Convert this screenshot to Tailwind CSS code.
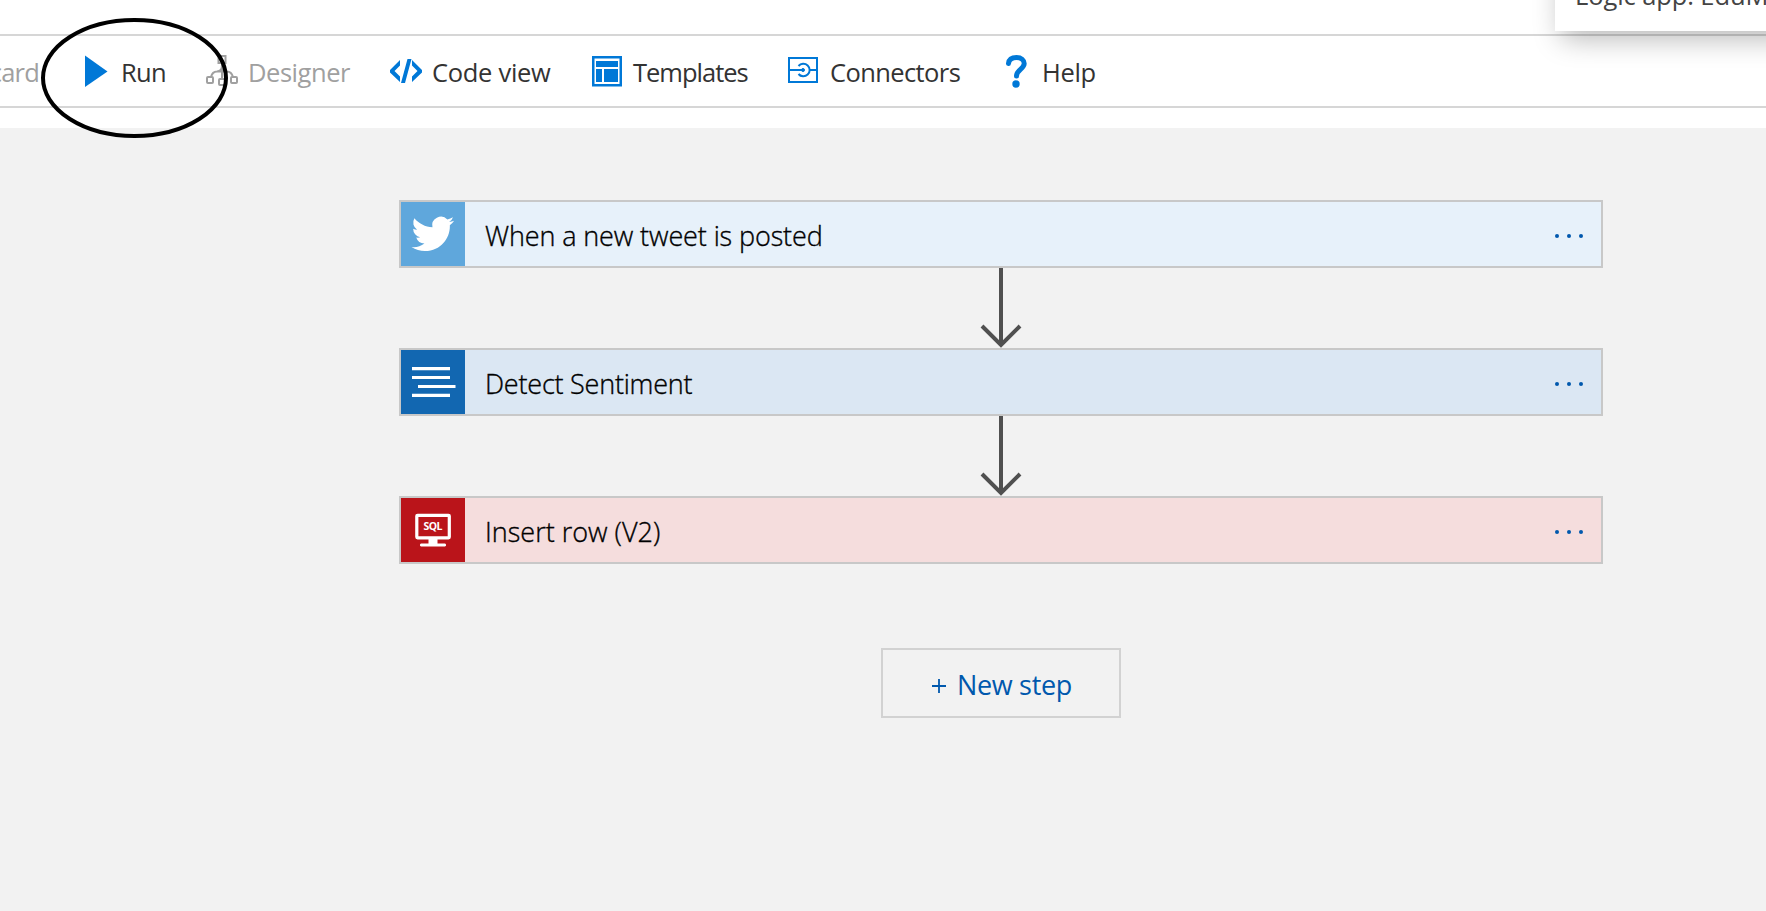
<!DOCTYPE html>
<html lang="en">
<head>
<meta charset="utf-8">
<title>Logic app designer</title>
<script src="https://cdn.jsdelivr.net/npm/@tailwindcss/browser@4"></script>
</head>
<body class="w-[1766px] h-[911px] overflow-hidden bg-white relative flex flex-col font-['Open_Sans','Noto_Sans',sans-serif]">
<header class="mt-[34px] h-[74px] shrink-0 border-y-2 border-[#d6d6d6] pt-[2px] flex items-center text-[25.5px] leading-[34px] text-[#333] whitespace-nowrap">
  <div class="w-[80px] shrink-0 text-[#a0a0a0] flex justify-start"><span class="w-[39px] flex justify-end tracking-[-0.8px]">Discard</span></div>
  <div class="w-[126px] shrink-0 flex items-center">
    <svg class="w-[32px] h-[34px] mr-[9px]" viewBox="0 0 32 34"><path d="M5 .5 27.500 16.500 5 32Z" fill="#0078d7"/></svg>
    <span class="tracking-[-0.7px]">Run</span>
  </div>
  <div class="w-[184px] shrink-0 flex items-center text-[#a0a0a0]">
    <svg class="w-[32px] h-[34px] mr-[10px]" viewBox="0 0 32 34" fill="none" stroke="#a0a0a0" stroke-width="2"><rect x="12.500" y="1" width="7" height="7"/><rect x="1" y="22" width="6" height="6" rx="1"/><rect x="13" y="24" width="6" height="6" rx="1"/><rect x="25" y="22" width="6" height="6" rx="1"/><path d="M16 8v16M5 22c1-4 3-5.500 6-5.500h10c3 0 5 2 6 5.500M16 10c0 5-2 6-5 6.500M16 10c0 5 2 6 5 6.500"/></svg>
    <span class="tracking-[-0.45px]">Designer</span>
  </div>
  <div class="w-[201px] shrink-0 flex items-center">
    <svg class="w-[32px] h-[34px] mr-[10px]" viewBox="0 0 32 34" fill="#0078d7"><path d="M10 5v5.500L4.500 16 10 21.500V27L0 17.500v-2.500ZM22 5v5.500l5.500 5.500-5.500 5.500V27l10-9.500v-2.500ZM17.500 4h4L15 28h-4Z"/></svg>
    <span class="tracking-[-0.3px]">Code view</span>
  </div>
  <div class="w-[196px] shrink-0 flex items-center">
    <svg class="w-[32px] h-[34px] mr-[10px]" viewBox="0 0 32 34"><rect x="1" y="1" width="30" height="30.500" fill="#0078d7"/><path d="M3.500 3.500h25v25.500h-25Z" fill="#fff"/><path d="M5 6h22v6H5ZM5 14h6v13H5ZM13 14h14v13H13Z" fill="#0078d7"/></svg>
    <span class="tracking-[-1px]">Templates</span>
  </div>
  <div class="w-[213px] shrink-0 flex items-center">
    <svg class="w-[32px] h-[34px] mr-[11px]" viewBox="0 0 32 34" fill="none" stroke="#0078d7" stroke-width="2"><rect x="2" y="3" width="28" height="24"/><path d="M2 15h14M22 15h8M11.500 11a6.300 6.300 0 1 1 0 8"/><circle cx="16" cy="15" r="1.500" fill="#0078d7" stroke-width="1"/></svg>
    <span class="tracking-[-0.6px]">Connectors</span>
  </div>
  <div class="shrink-0 flex items-center">
    <svg class="w-[32px] h-[34px] mr-[10px]" viewBox="0 0 32 34" fill="none" stroke="#0078d7" stroke-width="5"><path d="M8.500 8.500C9 4.500 12 2.600 16.500 2.600c5 0 7.700 2.600 7.700 6 0 5.400-7.700 6.400-7.700 12.400" stroke-linecap="round"/><circle cx="16" cy="29" r="3.700" fill="#0078d7" stroke="none"/></svg>
    <span class="tracking-[-0.35px]">Help</span>
  </div>
</header>
<main class="mt-[20px] flex-1 bg-[#f2f2f2] pt-[72px] pl-[399px] flex flex-col text-[27px] text-black">
  <div class="w-[1204px] flex flex-col items-center">
    <section class="w-full h-[68px] border-2 border-[#c8c8c8] bg-[#e7f1fa] flex items-center">
      <div class="w-[64px] h-[64px] bg-[#5fa7dc] shrink-0"><svg class="w-full h-full" viewBox="0 0 64 64"><g transform="translate(10.500 10.700) scale(1.780 1.760)"><path fill="#fff" d="M23.950 4.570a10 10 0 0 1-2.820.77 4.960 4.960 0 0 0 2.160-2.720c-.95.550-2 .95-3.130 1.180a4.920 4.920 0 0 0-8.380 4.480C7.690 8.090 4.070 6.130 1.640 3.160a4.920 4.920 0 0 0 1.520 6.570 4.900 4.900 0 0 1-2.230-.61v.06a4.920 4.920 0 0 0 3.950 4.830 5 5 0 0 1-2.210.08 4.940 4.940 0 0 0 4.600 3.420A9.870 9.870 0 0 1 0 19.540a14 14 0 0 0 7.550 2.210c9.050 0 14-7.500 14-13.980 0-.21 0-.42-.02-.63a9.940 9.940 0 0 0 2.420-2.570Z"/></g></svg></div>
      <h2 class="ml-[20px] mt-[4px] flex-1 font-light [-webkit-text-stroke:0.35px_#000] tracking-[-0.12px]">When a new tweet is posted</h2>
      <svg class="w-[28px] h-[4px] mr-[18px] mt-[4px]" viewBox="0 0 28 4" fill="#0058ad"><circle cx="2" cy="2" r="2"/><circle cx="14" cy="2" r="2"/><circle cx="26" cy="2" r="2"/></svg>
    </section>
    <svg class="w-[44px] h-[80px]" viewBox="0 0 44 80" fill="none" stroke="#505050" stroke-width="4"><path d="M22 0v77M3 58 22 77l19-19"/></svg>
    <section class="w-full h-[68px] border-2 border-[#c8c8c8] bg-[#dbe7f3] flex items-center">
      <div class="w-[64px] h-[64px] bg-[#1267b1] shrink-0"><svg class="w-full h-full" viewBox="0 0 64 64" fill="#fff"><path d="M11 17h38v3.300H11ZM11 26h38v3H11ZM17 35h37.500v3H17ZM11 43.700h38V47H11Z"/></svg></div>
      <h2 class="ml-[20px] mt-[4px] flex-1 font-light [-webkit-text-stroke:0.35px_#000] tracking-[-0.22px]">Detect Sentiment</h2>
      <svg class="w-[28px] h-[4px] mr-[18px] mt-[4px]" viewBox="0 0 28 4" fill="#0058ad"><circle cx="2" cy="2" r="2"/><circle cx="14" cy="2" r="2"/><circle cx="26" cy="2" r="2"/></svg>
    </section>
    <svg class="w-[44px] h-[80px]" viewBox="0 0 44 80" fill="none" stroke="#505050" stroke-width="4"><path d="M22 0v77M3 58 22 77l19-19"/></svg>
    <section class="w-full h-[68px] border-2 border-[#c8c8c8] bg-[#f5dddd] flex items-center">
      <div class="w-[64px] h-[64px] bg-[#ba141a] shrink-0"><svg class="w-full h-full" viewBox="0 0 64 64"><rect x="15.800" y="17.300" width="32.500" height="22.500" rx=".8" fill="none" stroke="#fff" stroke-width="3.200"/><path d="M27.500 41h9v4.500H43a1 1 0 0 1 1 3H20a1 1 0 0 1 1-3h6.500Z" fill="#fff"/><text x="32" y="32.300" text-anchor="middle" font-family="Open Sans" font-weight="700" font-size="10.500" textLength="19" fill="#fff">SQL</text></svg></div>
      <h2 class="ml-[20px] mt-[4px] flex-1 font-light [-webkit-text-stroke:0.35px_#000] tracking-[0px]">Insert row (V2)</h2>
      <svg class="w-[28px] h-[4px] mr-[18px] mt-[4px]" viewBox="0 0 28 4" fill="#0058ad"><circle cx="2" cy="2" r="2"/><circle cx="14" cy="2" r="2"/><circle cx="26" cy="2" r="2"/></svg>
    </section>
    <button class="mt-[84px] w-[240px] h-[70px] border-2 border-[#d2d2d2] text-[#0058ad] pt-[5px] pl-[2px] flex items-center justify-center"><svg class="w-[14px] h-[14px] mr-[11px]" viewBox="0 0 14 14"><path d="M7 0v14M0 7h14" stroke="#0058ad" stroke-width="1.800"/></svg><span class="tracking-[-0.3px]">New step</span></button>
  </div>
</main>
<aside class="absolute left-[1555px] top-[-40px] w-[260px] h-[71px] bg-white shadow-[6px_8px_28px_rgba(0,0,0,0.28)] pl-[20px] pt-[18px] text-[25.500px] leading-[34px] tracking-[-0.1px] text-[#444] whitespace-nowrap">Logic app: EduML</aside>
<svg class="absolute left-[39px] top-[16px] w-[192px] h-[124px]" viewBox="0 0 192 124"><ellipse cx="95.500" cy="62" rx="91.500" ry="58" fill="none" stroke="#000" stroke-width="4"/></svg>
</body>
</html>
